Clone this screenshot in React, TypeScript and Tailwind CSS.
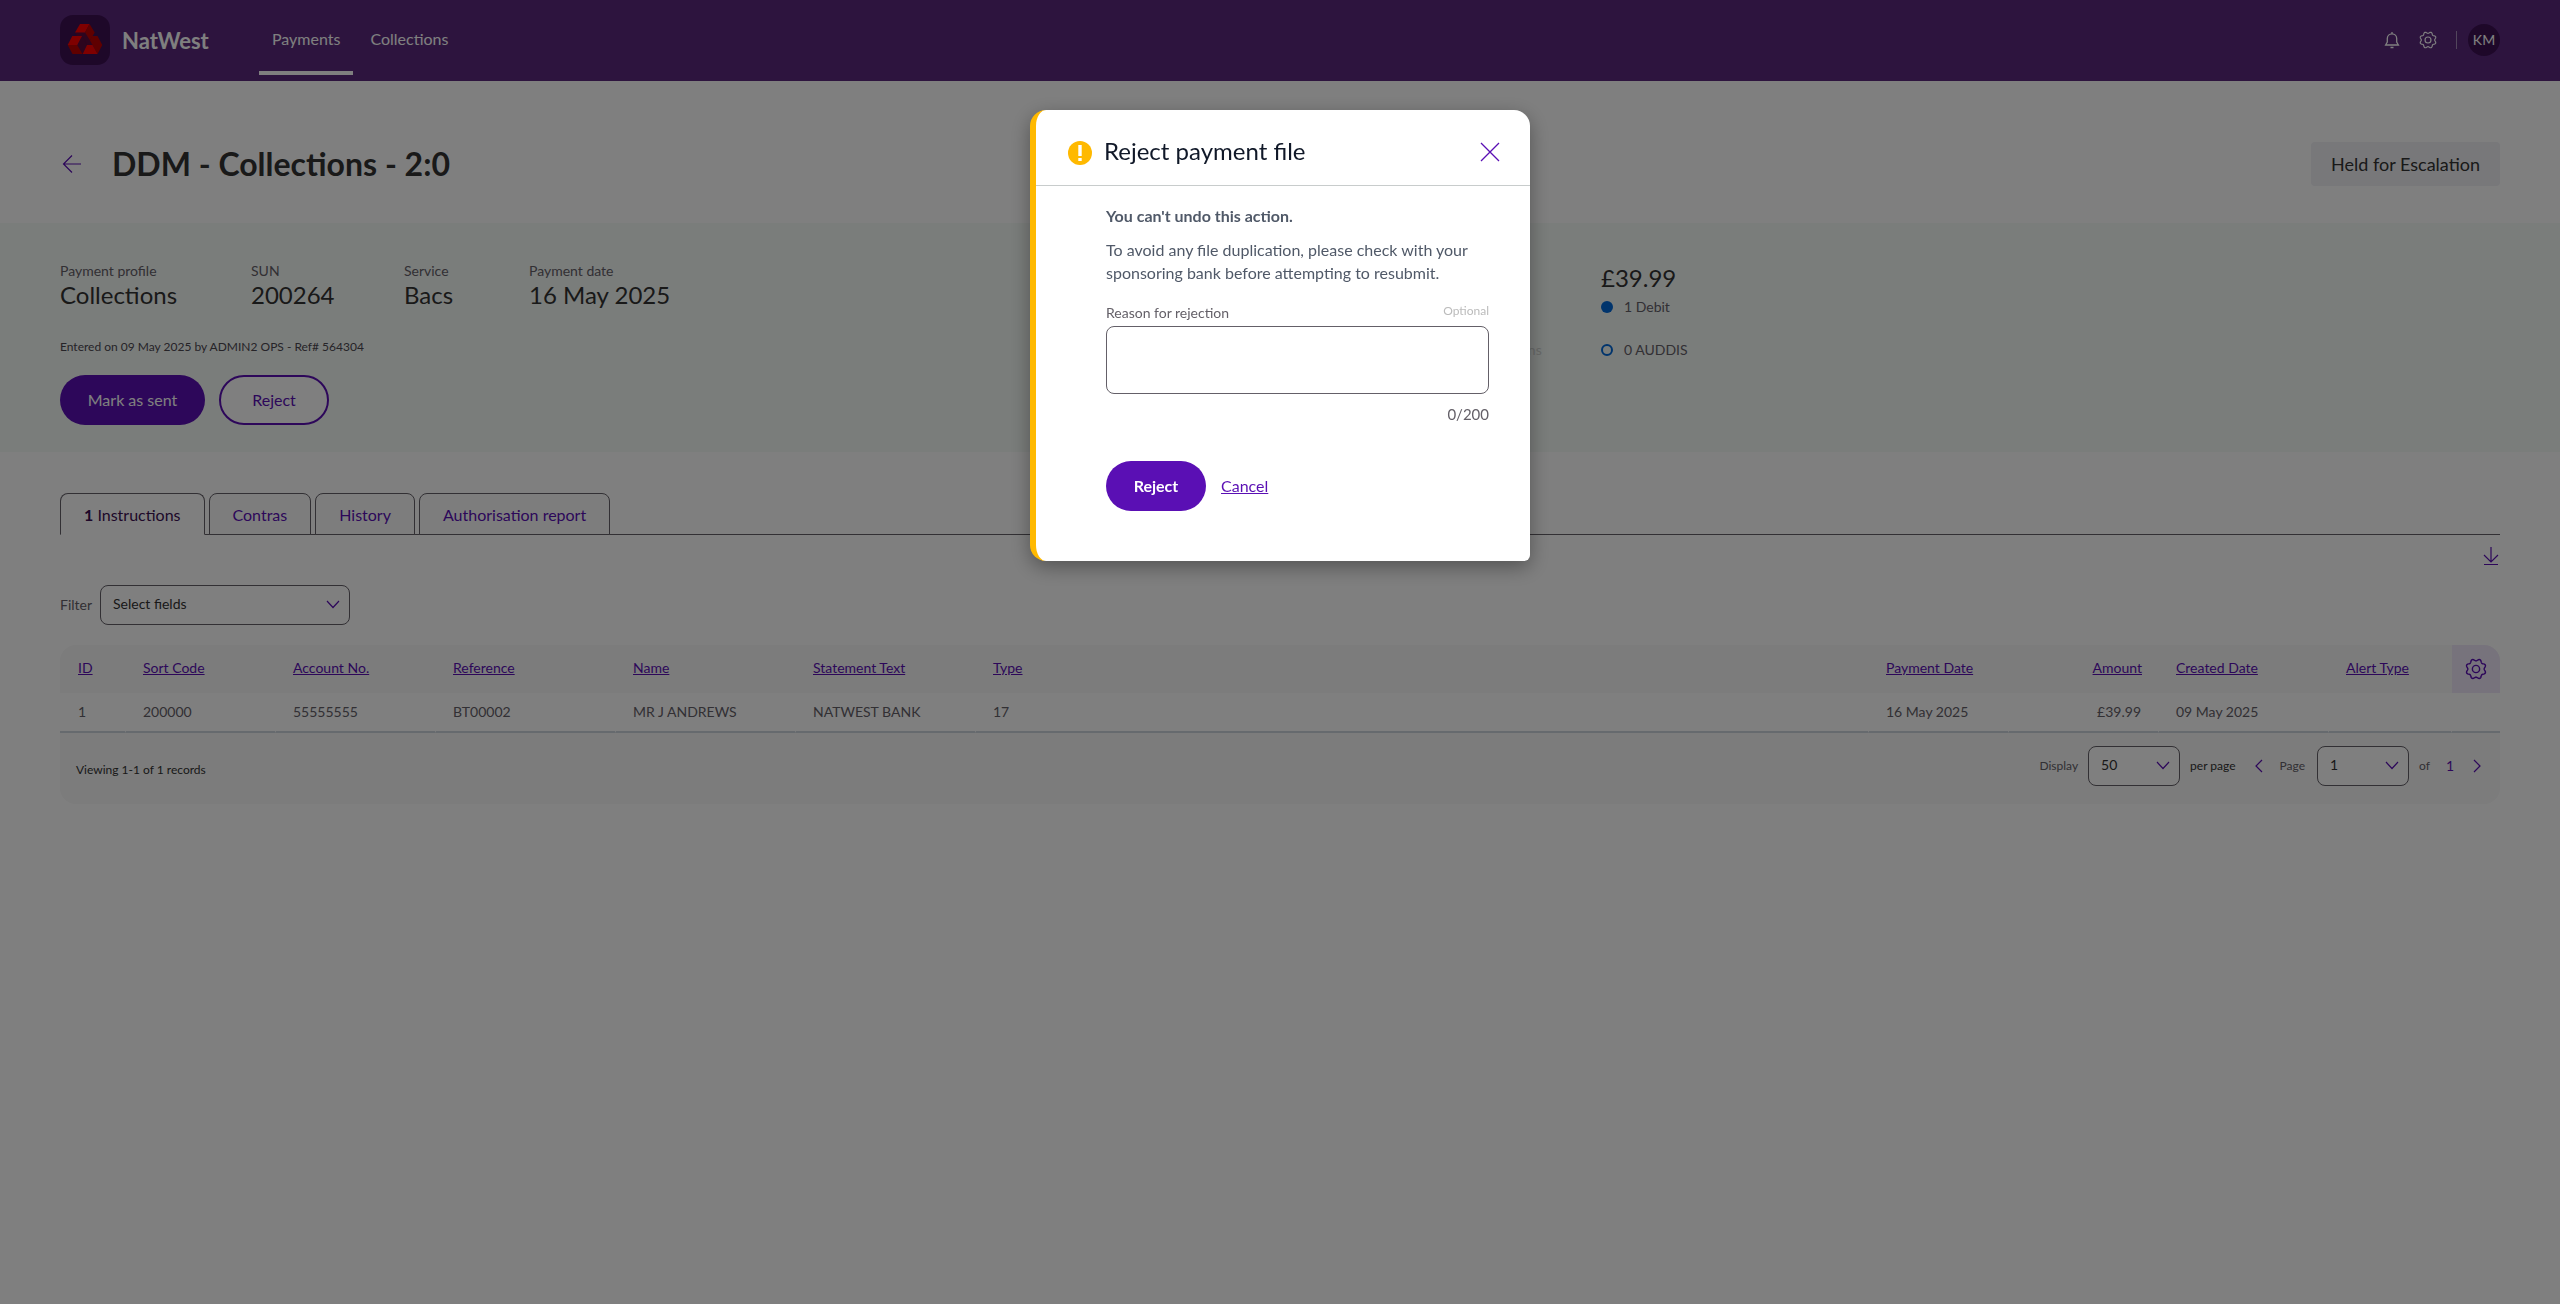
import { ReactNode, useState } from "react";

interface SummaryItem {
  label: string;
  value: string;
}

const summaryItems: SummaryItem[] = [
  { label: "Payment profile", value: "Collections" },
  { label: "SUN", value: "200264" },
  { label: "Service", value: "Bacs" },
  { label: "Payment date", value: "16 May 2025" },
];

interface Column {
  name: string;
  value: string;
  width: string;
  align?: string;
}

const columns: Column[] = [
  { name: "ID", value: "1", width: "w-[66px]" },
  { name: "Sort Code", value: "200000", width: "w-[150px]" },
  { name: "Account No.", value: "55555555", width: "w-[160px]" },
  { name: "Reference", value: "BT00002", width: "w-[180px]" },
  { name: "Name", value: "MR J ANDREWS", width: "w-[180px]" },
  { name: "Statement Text", value: "NATWEST BANK", width: "w-[180px]" },
  { name: "Type", value: "17", width: "w-auto" },
  { name: "Payment Date", value: "16 May 2025", width: "w-[140px]" },
  { name: "Amount", value: "£39.99", width: "w-[150px]", align: "text-right" },
  { name: "Created Date", value: "09 May 2025", width: "w-[170px]" },
  { name: "Alert Type", value: "", width: "w-[123px]" },
];

// outline of an eight-toothed wheel in a 20x20 box
const gearPoints = Array.from({ length: 96 }, (_, i) => {
  const angle = (i / 96) * Math.PI * 2;
  const radius = 8.3 - 0.9 * Math.cos(angle * 8);
  const x = 10 + radius * Math.sin(angle);
  const y = 10 - radius * Math.cos(angle);
  return `${x.toFixed(2)},${y.toFixed(2)}`;
}).join(" ");

function Logo() {
  return (
    <svg viewBox="0 0 50 50" className="size-[50px]" aria-hidden="true">
      <rect width="50" height="50" rx="13" fill="#3c1053" />
      <path d="M15 17.500h10l5 8-3 5-4-7h-5z" fill="#5a0a3c" />
      <path d="M22 21l5 9-4.500 9-5-9z" fill="#5a0a3c" />
      <path d="M25 25h9l-1.500 5H27z" fill="#5a0a3c" />
      <path d="M20 9h9.500L25 17.500H15z" fill="#ff0000" />
      <path d="M29.500 9l5.200 8.500-4.700 8-5-8z" fill="#be0000" />
      <path d="M12.300 21H22l-4.700 9H7.700z" fill="#ff0000" />
      <path d="M7.700 30h9.600l5.200 9h-10z" fill="#be0000" />
      <path d="M32 21h5.500l4.800 9-4.800 9-5-9-2.500-4.500z" fill="#be0000" />
      <path d="M27 30h5.500l5 9H22.700z" fill="#ff0000" />
    </svg>
  );
}

function Gear({ className }: { className: string }) {
  return (
    <svg
      viewBox="0 0 20 20"
      className={className}
      fill="none"
      stroke="currentColor"
      strokeWidth="1.3"
      aria-hidden="true"
    >
      <polygon points={gearPoints} />
      <circle cx="10" cy="10" r="3.3" />
    </svg>
  );
}

function Chevron({ className, d }: { className: string; d: string }) {
  return (
    <svg
      viewBox="0 0 14 14"
      className={className}
      fill="none"
      stroke="currentColor"
      strokeWidth="1.2"
      aria-hidden="true"
    >
      <path d={d} />
    </svg>
  );
}

function SelectBox({
  id,
  width,
  options,
}: {
  id: string;
  width: string;
  options: string[];
}) {
  return (
    <div className={`relative ${width}`}>
      <select
        id={id}
        className="h-10 w-full appearance-none rounded-lg border border-[#646068] bg-white px-3 pb-0.5 text-sm text-[#333333]"
      >
        {options.map((option) => (
          <option key={option}>{option}</option>
        ))}
      </select>
      <Chevron
        className="pointer-events-none absolute top-3 right-2.5 size-3.5 text-[#5a0fb4]"
        d="M1 4l6 6.500 6-6.500"
      />
    </div>
  );
}

function Tab({ active, children }: { active?: boolean; children: ReactNode }) {
  return (
    <button
      role="tab"
      aria-selected={!!active}
      className={`-mb-px h-[42px] rounded-t-lg border border-[#646068] px-[23px] pt-0.5 ${
        active
          ? "border-b-white bg-white text-[#3c1053]"
          : "bg-[#fbfbfb] text-[#5a0fb4]"
      }`}
    >
      {children}
    </button>
  );
}

function Header() {
  return (
    <header className="flex h-[81px] items-center bg-[#5a287d] px-15 pb-px text-white">
      <Logo />
      <span className="ml-3 w-[84px] text-[22px] font-bold">NatWest</span>
      <nav className="ml-[53px] flex h-full gap-1">
        <a
          href="#payments"
          className="relative flex items-center px-[13px] pb-0.5 after:absolute after:inset-x-0 after:bottom-[5px] after:h-1 after:bg-white"
        >
          Payments
        </a>
        <a href="#collections" className="flex items-center px-[13px] pb-0.5">
          Collections
        </a>
      </nav>
      <div className="ml-auto flex items-center">
        <button aria-label="Notifications">
          <svg
            viewBox="0 0 16 18"
            className="h-[18px] w-4"
            fill="none"
            stroke="currentColor"
            strokeWidth="1.3"
          >
            <path d="M8 1v2M3.300 11V7.500a4.700 4.700 0 019.400 0V11l1.700 3H1.600zM6.500 16.500h3" />
          </svg>
        </button>
        <button aria-label="Settings" className="ml-[19px]">
          <Gear className="size-[18px]" />
        </button>
        <span className="ml-[19px] h-[18px] w-px bg-[#a58cb8]" />
        <button className="ml-[11px] size-8 rounded-full bg-[#3c1053] text-sm">
          KM
        </button>
      </div>
    </header>
  );
}

function Summary() {
  return (
    <section className="flex h-[229px] bg-[#f5faf7] px-15 pt-[38px]">
      <div className="flex-1">
        <dl className="grid grid-cols-[191px_153px_125px_auto] justify-start">
          {summaryItems.map((item) => (
            <div key={item.label}>
              <dt className="text-sm text-[#646068]">{item.label}</dt>
              <dd className="text-2xl leading-7 text-[#333333]">{item.value}</dd>
            </div>
          ))}
        </dl>
        <p className="mt-7 text-xs leading-5 text-[#4c4850]">
          Entered on 09 May 2025 by ADMIN2 OPS - Ref# 564304
        </p>
        <div className="mt-[18px] flex gap-3.5">
          <button className="h-[50px] w-[145px] rounded-full bg-[#5a0fb4] text-white">
            Mark as sent
          </button>
          <button className="h-[50px] w-[110px] rounded-full border-2 border-[#5a0fb4] bg-white text-[#5a0fb4]">
            Reject
          </button>
        </div>
      </div>
      <div className="flex w-[1031px] text-sm text-[#646068]">
        <div className="w-[132px] pt-[79px] text-[#cfd2d0]">Instructions</div>
        <div>
          <p className="pb-0.5 text-2xl leading-[34px] text-[#333333]">£39.99</p>
          <p className="flex items-center gap-[11px] leading-5">
            <span className="size-3 rounded-full bg-[#0068d9]" />1 Debit
          </p>
          <p className="mt-[23px] flex items-center gap-[11px] leading-5">
            <span className="size-3 rounded-full border-2 border-[#0068d9]" />0
            AUDDIS
          </p>
        </div>
      </div>
    </section>
  );
}

function Instructions() {
  return (
    <section className="px-15 pt-[41px]">
      <div role="tablist" className="flex gap-1 border-b border-[#646068]">
        <Tab active>
          <b>1</b> Instructions
        </Tab>
        <Tab>Contras</Tab>
        <Tab>History</Tab>
        <Tab>Authorisation report</Tab>
      </div>

      <div className="mt-[11px] flex justify-end">
        <button aria-label="Download" className="text-[#5a0fb4]">
          <svg
            viewBox="0 0 18 20"
            className="h-5 w-[18px]"
            fill="none"
            stroke="currentColor"
            strokeWidth="1.2"
          >
            <path d="M9 1v15M2 9l7 7 7-7M2 18.500h14" />
          </svg>
        </button>
      </div>

      <div className="mt-[19px] flex items-center">
        <label htmlFor="filter" className="w-10 text-sm text-[#646068]">
          Filter
        </label>
        <SelectBox id="filter" width="w-[250px]" options={["Select fields"]} />
      </div>

      <div className="mt-5 overflow-hidden rounded-2xl bg-[#f8f8f8] text-sm">
        <table className="w-full table-fixed border-separate border-spacing-0">
          <thead>
            <tr className="h-12">
              {columns.map((column) => (
                <th
                  key={column.name}
                  className={`${column.width} ${column.align ?? "text-left"} px-[17px] pt-0 pb-0.5 font-normal whitespace-nowrap first:pl-[18px]`}
                >
                  <a href="#sort" className="text-[#5a0fb4] underline">
                    {column.name}
                  </a>
                </th>
              ))}
              <th className="w-12 bg-[#efe6f8] p-0 text-[#5a0fb4]">
                <button aria-label="Table settings" className="block w-full">
                  <Gear className="mx-auto size-[22px]" />
                </button>
              </th>
            </tr>
          </thead>
          <tbody>
            <tr className="h-10 bg-white">
              {columns.map((column) => (
                <td
                  key={column.name}
                  className={`${column.align ?? "text-left"} border-r border-b-2 border-r-white border-b-[#cdd5dd] px-[17px] py-0 text-[#646068] first:pl-[18px]`}
                >
                  {column.value}
                </td>
              ))}
              <td className="border-b-2 border-[#cdd5dd]" />
            </tr>
          </tbody>
        </table>
        <div className="flex h-[71px] items-center px-4 pb-1.5 text-xs text-[#646068]">
          <span className="pt-2 text-[#333333]">Viewing 1-1 of 1 records</span>
          <label htmlFor="page-size" className="mr-2.5 ml-auto">
            Display
          </label>
          <SelectBox id="page-size" width="w-[92px]" options={["50"]} />
          <span className="ml-2.5 text-[#333333]">per page</span>
          <button aria-label="Previous page" className="ml-4 text-[#5a0fb4]">
            <Chevron className="size-3.5" d="M10 1l-6 6 6 6" />
          </button>
          <label htmlFor="page" className="mr-3 ml-3.5">
            Page
          </label>
          <SelectBox id="page" width="w-[92px]" options={["1"]} />
          <span className="ml-2.5">of</span>
          <a href="#last" className="ml-4 text-sm text-[#5a0fb4]">
            1
          </a>
          <button aria-label="Next page" className="ml-4 text-[#5a0fb4]">
            <Chevron className="size-3.5" d="M4 1l6 6-6 6" />
          </button>
        </div>
      </div>
    </section>
  );
}

function RejectDialog() {
  const [reason, setReason] = useState("");

  return (
    <div className="fixed inset-0 flex items-start justify-center bg-black/50 pt-[110px]">
      <div
        role="dialog"
        aria-modal="true"
        aria-labelledby="dialog-title"
        className="w-[500px] rounded-2xl rounded-br-md border-l-6 border-[#ffb900] bg-white pb-[50px] text-[#505968] shadow-[0_6px_20px_rgba(0,0,0,0.35)]"
      >
        <div className="flex h-[76px] items-center border-b border-[#c8cccc] pt-1.5 pr-[30px] pl-8">
          <svg viewBox="0 0 24 24" className="mt-1 size-6" aria-hidden="true">
            <circle cx="12" cy="12" r="12" fill="#ffb900" />
            <path d="M10.300 4h3.400v11h-3.400zM10.300 17h3.400v3h-3.400z" fill="#fff" />
          </svg>
          <h2 id="dialog-title" className="ml-3 text-2xl text-[#101828]">
            Reject payment file
          </h2>
          <button aria-label="Close" className="mt-0.5 ml-auto text-[#5a0fb4]">
            <svg
              viewBox="0 0 20 20"
              className="size-5"
              stroke="currentColor"
              strokeWidth="1.3"
            >
              <path d="M1 1l18 18M19 1L1 19" />
            </svg>
          </button>
        </div>
        <div className="pt-[18px] pr-[41px] pl-[70px]">
          <p className="font-bold">You can't undo this action.</p>
          <p className="mt-2.5 leading-[23px]">
            To avoid any file duplication, please check with your sponsoring
            bank before attempting to resubmit.
          </p>
          <div className="mt-[17px] flex justify-between pb-px">
            <label htmlFor="reason" className="text-sm leading-6 text-[#646068]">
              Reason for rejection
            </label>
            <span className="text-xs leading-5 text-[#bbbbbb]">Optional</span>
          </div>
          <textarea
            id="reason"
            maxLength={200}
            value={reason}
            onChange={(e) => setReason(e.target.value)}
            className="block h-[68px] w-full resize-none rounded-lg border border-[#646068] p-2"
          />
          <p className="mt-2 text-right text-[15px] leading-6 text-[#646068]">
            {reason.length}/200
          </p>
          <div className="mt-[35px] flex items-center gap-[15px]">
            <button className="h-[50px] w-[100px] rounded-full bg-[#5a0fb4] font-bold text-white">
              Reject
            </button>
            <button className="text-[#5a0fb4] underline">Cancel</button>
          </div>
        </div>
      </div>
    </div>
  );
}

export default function App() {
  return (
    <div className="min-h-screen bg-white font-['Lato','Open_Sans',sans-serif] text-base">
      <Header />
      <div className="flex h-[142px] items-center px-15 pt-6">
        <a href="#back" aria-label="Back" className="text-[#5a0fb4]">
          <svg
            viewBox="0 0 24 24"
            className="size-6"
            fill="none"
            stroke="currentColor"
            strokeWidth="1.2"
          >
            <path d="M21 12H3.500M12 3.500L3.500 12l8.500 8.500" />
          </svg>
        </a>
        <h1 className="ml-7 text-[32px] font-bold text-[#333333]">
          DDM - Collections - 2:0
        </h1>
        <span className="ml-auto rounded bg-[#f0f0f4] px-5 py-2 text-lg leading-7 text-[#333333]">
          Held for Escalation
        </span>
      </div>
      <Summary />
      <Instructions />
      <RejectDialog />
    </div>
  );
}
